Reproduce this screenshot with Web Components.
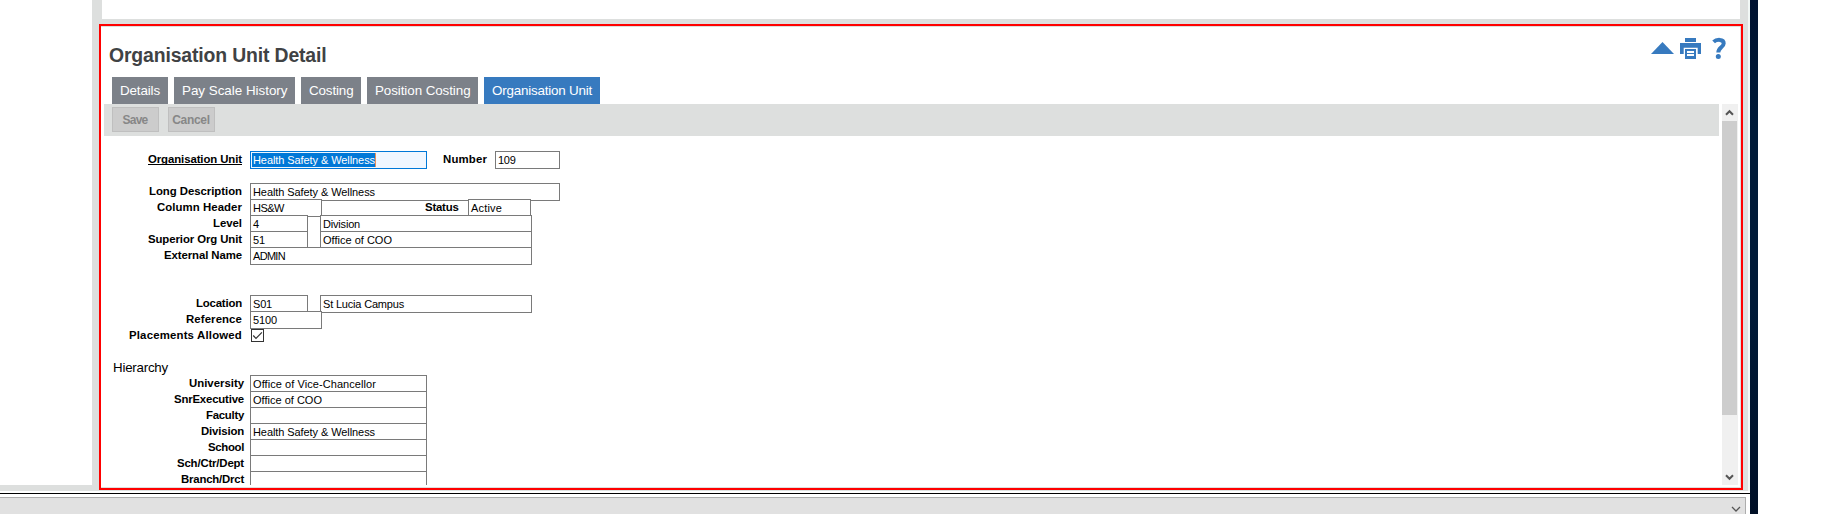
<!DOCTYPE html>
<html lang="en"><head><meta charset="utf-8"><title>Organisation Unit Detail</title>
<style>html,body{margin:0;height:514px;overflow:hidden;background:#fff;font-family:"Liberation Sans",Arial,sans-serif}</style></head>
<body><app-shell></app-shell>
<script>
function define(name, html, init){
  const t=document.createElement('template'); t.innerHTML=html;
  customElements.define(name, class extends HTMLElement{
    connectedCallback(){
      if(this.shadowRoot) return;
      this.attachShadow({mode:'open'}).appendChild(t.content.cloneNode(true));
      if(init) init(this,this.shadowRoot);
    }
  });
}
define('fit-text','<style>:host{display:inline-block;white-space:pre}</style><slot></slot>',el=>{
  const w=parseFloat(el.getAttribute('w'));
  if(!w) return;
  const n=el.getBoundingClientRect().width;
  el.style.letterSpacing=((w-n)/el.textContent.length)+'px';
  el.style.width=w+'px';
});
define('nav-tab',`<style>:host{display:block;box-sizing:border-box;height:27px;width:var(--w);padding:0 0 0 8px;background:#7c8189;color:#fff;font-size:13.4px;line-height:27px;margin-right:6px;overflow:hidden}
:host([active]){background:#377abf}</style><slot></slot>`,el=>el.style.setProperty('--w',el.getAttribute('w')+'px'));
define('tool-button',`<style>:host{display:flex;justify-content:center;box-sizing:border-box;width:47px;height:25px;padding-right:1px;background:#ccc;border:1px solid #bfbfbf;color:#878787;font:bold 12px/24px "Liberation Sans",Arial,sans-serif}</style><slot></slot>`);
define('form-row',`<style>:host{display:flex;height:16px;flex:none}
.l{width:138px;margin-right:8px;text-align:right;font:bold 11.4px/17px "Liberation Sans",Arial,sans-serif;white-space:nowrap}
:host([hier]) .l{width:140px;margin-right:6px}:host([link]) .l fit-text{border-bottom:1px solid #000;height:13px}
</style><div class="l"></div><slot></slot>`,(el,r)=>{
  const f=document.createElement('fit-text');f.textContent=el.getAttribute('label');f.setAttribute('w',el.getAttribute('w'));r.querySelector('.l').append(f);});
define('side-label',`<style>:host{display:block;font:bold 11.4px/17px "Liberation Sans",Arial,sans-serif}</style><slot></slot>`);
define('text-field',`<style>:host{display:block;box-sizing:border-box;flex:none;height:18px;background:#fff;border:1px solid #7a7a7a;padding-left:2px;font-size:11px;line-height:17px;white-space:nowrap}
:host([focus]){border-color:#0078d7;background:#f0f7ff}
:host([focus]) span{display:block;height:14px;width:122px;margin:1px 0 0 -1px;padding-left:1px;line-height:15px;background:#0078d7;color:#fff;border-right:1px solid #e8935a}</style><span><slot></slot></span>`,el=>{el.style.width=el.getAttribute('width')+'px'});
define('check-box',`<style>:host{display:block;box-sizing:border-box;width:13px;height:13px;margin:2px 0 0 1px;border:1px solid #333;background:#fff}svg{display:block}</style>
<svg width="11" height="11"><path d="M1.2 5.5 4 8.3 9.9 2.4" fill="none" stroke="#333" stroke-width="1.2"/></svg>`);
define('scroll-bar',`<style>:host{display:flex;flex-direction:column;width:16px;height:381px;background:#f0f0f0}svg{flex:none;display:block}
.thumb{width:15px;height:294px;background:#cdcdcd}.gap{flex:1}</style>
<svg width="16" height="17"><path d="M4 10.8 7.5 7.2 11 10.8" fill="none" stroke="#555" stroke-width="2"/></svg><div class="thumb"></div><div class="gap"></div>
<svg width="16" height="17"><path d="M4 7.2 7.5 10.8 11 7.2" fill="none" stroke="#555" stroke-width="2"/></svg>`);
define('panel-icons',`<style>:host{display:block}svg{display:block}</style>
<svg width="80" height="24" viewBox="1650 36 80 24" fill="#377abf"><path d="M1651 54 1662.5 42 1674 54Z"/>
<path d="M1685 38h11v4h-11zM1680 43h21v11h-3.3v-6.2h-14v6.2h-3.7z"/><path fill-rule="evenodd" d="M1685 49h11v10h-11zM1687 51v2h7v-2zM1687 54v2h7v-2z"/>
<path d="M1713.6 41.9C1716.4 39.3 1723.8 38.6 1723.7 43.5 1723.6 47.4 1718.3 47.4 1718.3 52.6" fill="none" stroke="#377abf" stroke-width="4"/><circle cx="1718.3" cy="56.6" r="2.5"/></svg>`);
define('unit-form',`<style>:host{display:flex;flex-direction:column;height:349px;overflow:hidden;color:#000}
.g{flex:none}h3{margin:0 0 -2px 9px;flex:none;font-weight:400;font-size:13.3px;height:18px;line-height:18px}</style>
<div class="g" style="height:15px"></div>
<form-row link label="Organisation Unit" w="94"><text-field width="177" focus><fit-text w="122">Health Safety &amp; Wellness</fit-text></text-field><side-label style="margin-left:16px;width:52px"><fit-text w="44">Number</fit-text></side-label><text-field width="65"><fit-text w="17.5">109</fit-text></text-field></form-row>
<div class="g" style="height:16px"></div>
<form-row label="Long Description" w="93"><text-field width="310"><fit-text w="122">Health Safety &amp; Wellness</fit-text></text-field></form-row>
<form-row label="Column Header" w="85"><text-field width="72"><fit-text w="31">HS&amp;W</fit-text></text-field><side-label style="margin-left:103px;width:43px"><fit-text w="33.5">Status</fit-text></side-label><text-field width="63"><fit-text w="31">Active</fit-text></text-field></form-row>
<form-row label="Level" w="29"><text-field width="58">4</text-field><text-field style="margin-left:12px" width="212"><fit-text w="37">Division</fit-text></text-field></form-row>
<form-row label="Superior Org Unit" w="94"><text-field width="58"><fit-text w="12">51</fit-text></text-field><text-field style="margin-left:12px" width="212"><fit-text w="69">Office of COO</fit-text></text-field></form-row>
<form-row label="External Name" w="78"><text-field width="282"><fit-text w="32">ADMIN</fit-text></text-field></form-row>
<div class="g" style="height:32px"></div>
<form-row label="Location" w="46"><text-field width="58"><fit-text w="19">S01</fit-text></text-field><text-field style="margin-left:12px" width="212"><fit-text w="81">St Lucia Campus</fit-text></text-field></form-row>
<form-row label="Reference" w="56"><text-field width="72"><fit-text w="24">5100</fit-text></text-field></form-row>
<form-row label="Placements Allowed" w="113"><check-box></check-box></form-row>
<div class="g" style="height:16px"></div><h3><fit-text w="55">Hierarchy</fit-text></h3>
<form-row hier label="University" w="55"><text-field width="177"><fit-text w="123">Office of Vice-Chancellor</fit-text></text-field></form-row>
<form-row hier label="SnrExecutive" w="70"><text-field width="177"><fit-text w="69">Office of COO</fit-text></text-field></form-row>
<form-row hier label="Faculty" w="38"><text-field width="177"></text-field></form-row>
<form-row hier label="Division" w="43"><text-field width="177"><fit-text w="122">Health Safety &amp; Wellness</fit-text></text-field></form-row>
<form-row hier label="School" w="36"><text-field width="177"></text-field></form-row>
<form-row hier label="Sch/Ctr/Dept" w="67"><text-field width="177"></text-field></form-row>
<form-row hier label="Branch/Drct" w="63"><text-field width="177"></text-field></form-row>`);
define('detail-panel',`<style>:host{display:flex;flex-direction:column;box-sizing:border-box;width:1644px;height:466px;border:2px solid #f00;background:#fff;box-shadow:inset -1px 1px #dddfde,inset 0 -1px #dddfde}
header{display:flex;justify-content:space-between;height:51px;flex:none;padding:0 11px 0 8px}
h1{margin:17px 0 0;font-size:19.4px;line-height:24px;color:#404244}h1 fit-text{display:block}
panel-icons{margin-top:10px}nav{display:flex;padding-left:11px;height:27px;flex:none}
main{display:flex;padding-left:3px;height:381px}.c{width:1615px;margin-right:3px}
.bar{display:flex;gap:9px;height:32px;box-sizing:border-box;background:#dddfde;padding:3px 8px}</style>
<header><h1><fit-text w="217.5">Organisation Unit Detail</fit-text></h1><panel-icons></panel-icons></header>
<nav><nav-tab w="56"><fit-text w="40">Details</fit-text></nav-tab><nav-tab w="121"><fit-text w="105.5">Pay Scale History</fit-text></nav-tab><nav-tab w="60"><fit-text w="44.5">Costing</fit-text></nav-tab><nav-tab w="111"><fit-text w="95.5">Position Costing</fit-text></nav-tab><nav-tab w="116" active><fit-text w="100">Organisation Unit</fit-text></nav-tab></nav>
<main><div class="c"><div class="bar"><tool-button><fit-text w="25">Save</fit-text></tool-button><tool-button><fit-text w="37.5">Cancel</fit-text></tool-button></div><unit-form></unit-form></div><scroll-bar></scroll-bar></main>`);
define('app-shell',`<style>:host{display:grid;grid-template-columns:1750px 8px 1fr;height:514px}
.w{display:flex;flex-direction:column;height:514px}.top{display:flex;height:491px;background:#dddfde;width:1748px;border-right:2px solid #f2f8f6}
.left{width:92px;height:485px;background:#fff}.mid{width:1644px;margin-left:7px}.prev{height:19px;margin:0 3px 5px;background:#fff}
.line{height:1px;margin-top:2px;background:#000}.status{display:flex;justify-content:flex-end;box-sizing:border-box;height:17px;margin-top:3px;width:1746px;border-top:1px solid #adadad;border-right:1px solid #adadad;background:#e1e1e1}
.navy{background:linear-gradient(#001230,#001a38 25%,#001a38 60%,#000f26)}</style>
<div class="w"><div class="top"><div class="left"></div><div class="mid"><div class="prev"></div><detail-panel></detail-panel></div></div><div class="line"></div><div class="status"><svg width="16" height="16" style="margin-right:1px"><path d="M4 9 8 13 12 9" fill="none" stroke="#555" stroke-width="1.3"/></svg></div></div><div class="navy"></div>`);
</script></body></html>
